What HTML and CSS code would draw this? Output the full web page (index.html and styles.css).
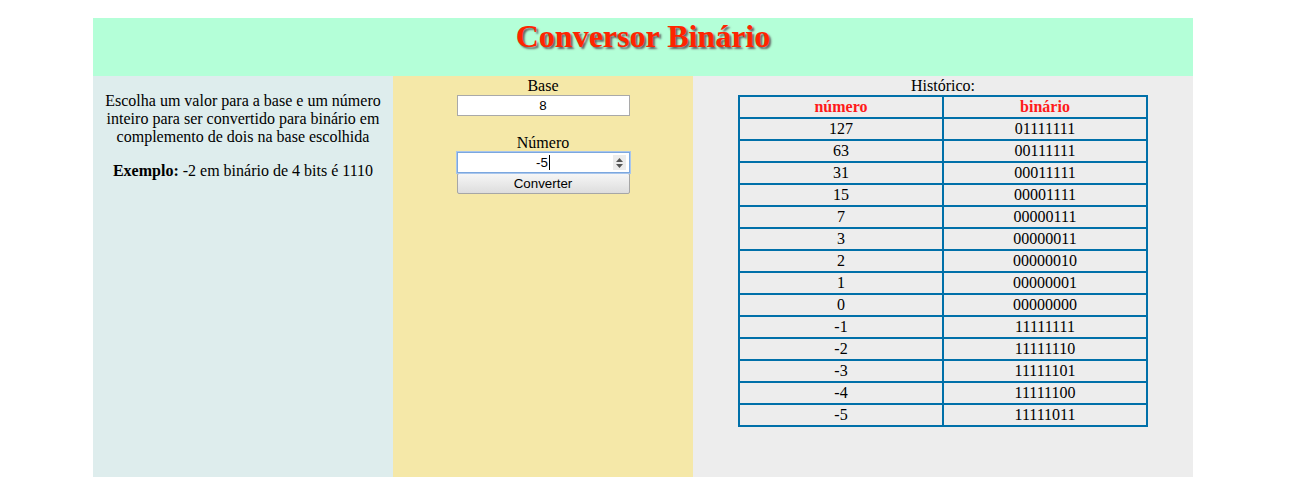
FILE: index.html
```html
<!DOCTYPE html>
<html lang="pt">
<head>
<meta charset="utf-8">
<title>Conversor Binário</title>
<link rel="stylesheet" href="styles.css">
</head>
<body>
<div class="page">
  <header class="header">
    <h1 class="title">Conversor Binário</h1>
  </header>
  <main class="columns">
    <section class="col col-info">
      <p>Escolha um valor para a base e um número inteiro para ser convertido para binário em complemento de dois na base escolhida</p>
      <p><b>Exemplo:</b> -2 em binário de 4 bits é 1110</p>
    </section>
    <section class="col col-form">
      <div class="label">Base</div>
      <input class="field" type="text" value="8">
      <div class="label label-gap">Número</div>
      <div class="field field-focus">
        <span class="field-text">-5</span><span class="caret"></span>
        <span class="spin">
          <svg width="11" height="14" viewBox="0 0 11 14"><path d="M5.5 2 L9 6 H2 Z" fill="#555"/><path d="M5.5 12 L9 8 H2 Z" fill="#555"/></svg>
        </span>
      </div>
      <button class="btn" type="button">Converter</button>
    </section>
    <section class="col col-hist">
      <div class="label">Histórico:</div>
      <table class="hist">
        <thead>
          <tr><th>número</th><th>binário</th></tr>
        </thead>
        <tbody>
          <tr><td>127</td><td>01111111</td></tr>
          <tr><td>63</td><td>00111111</td></tr>
          <tr><td>31</td><td>00011111</td></tr>
          <tr><td>15</td><td>00001111</td></tr>
          <tr><td>7</td><td>00000111</td></tr>
          <tr><td>3</td><td>00000011</td></tr>
          <tr><td>2</td><td>00000010</td></tr>
          <tr><td>1</td><td>00000001</td></tr>
          <tr><td>0</td><td>00000000</td></tr>
          <tr><td>-1</td><td>11111111</td></tr>
          <tr><td>-2</td><td>11111110</td></tr>
          <tr><td>-3</td><td>11111101</td></tr>
          <tr><td>-4</td><td>11111100</td></tr>
          <tr><td>-5</td><td>11111011</td></tr>
        </tbody>
      </table>
    </section>
  </main>
</div>
</body>
</html>
```

FILE: styles.css
```css
html, body {
  margin: 0;
  padding: 0;
  background: #ffffff;
}
body {
  font-family: "Liberation Serif", "Times New Roman", serif;
  font-size: 16px;
  line-height: 18px;
  color: #000;
}
.page {
  width: 1100px;
  margin: 18px 0 0 93px;
}
.header {
  background: #b4ffd8;
  height: 58px;
  text-align: center;
}
.title {
  margin: 0;
  font-size: 32px;
  line-height: 37px;
  font-weight: bold;
  color: #ff2400;
  text-shadow: 2px 2px 2px #666;
}
.columns {
  display: flex;
  height: 401px;
}
.col {
  box-sizing: border-box;
  text-align: center;
}
.col-info {
  width: 300px;
  background: #deeded;
  padding: 0 10px;
}
.col-info p {
  margin: 16px 0;
}
.col-form {
  width: 300px;
  background: #f5e8a8;
  display: flex;
  flex-direction: column;
  align-items: center;
}
.col-hist {
  width: 500px;
  background: #ededed;
}
.label {
  height: 18px;
  padding-top: 1px;
}
.label-gap {
  margin-top: 17px;
}
.field {
  box-sizing: border-box;
  width: 173px;
  height: 21px;
  margin: 0;
  padding: 0 4px;
  border: 1px solid #a9a9a9;
  background: #fff;
  font-family: "Liberation Sans", Arial, sans-serif;
  font-size: 13.33px;
  text-align: center;
  color: #000;
  outline: none;
}
.field-focus {
  position: relative;
  display: flex;
  align-items: center;
  justify-content: center;
  border: 1px solid #7ba7df;
  box-shadow: 0 0 0 1px #a9c6ec;
}
.field-text {
  line-height: 15px;
}
.caret {
  display: inline-block;
  width: 1px;
  height: 15px;
  background: #000;
  margin-left: 1px;
}
.spin {
  position: absolute;
  right: 3px;
  top: 2px;
  width: 13px;
  height: 15px;
  background: #ececec;
  display: flex;
  align-items: center;
  justify-content: center;
}
.btn {
  box-sizing: border-box;
  width: 173px;
  height: 21px;
  margin: 0;
  padding: 0;
  border: 1px solid #a6a6a6;
  border-radius: 2px;
  background: linear-gradient(#f6f6f6, #dddddd);
  font-family: "Liberation Sans", Arial, sans-serif;
  font-size: 13.33px;
  color: #000;
}
.hist {
  width: 410px;
  margin: 0 auto;
  border-collapse: collapse;
  border: 2px solid #0070a9;
}
.hist th, .hist td {
  border: 2px solid #0070a9;
  padding: 1px;
  line-height: 18px;
  text-align: center;
  width: 50%;
}
.hist th {
  color: #ff1a1a;
  font-weight: bold;
}
```
